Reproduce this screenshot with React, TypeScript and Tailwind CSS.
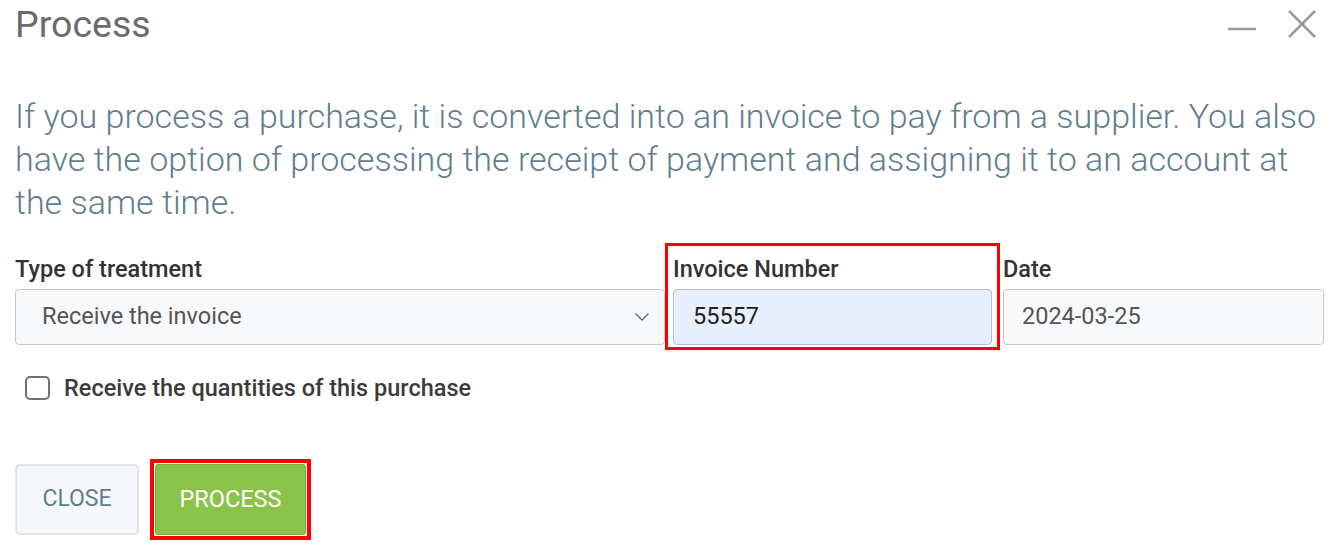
import { ChevronDown } from "lucide-react";

export default function App() {
  return (
    <div className="w-[1333px] h-[545px] bg-white overflow-hidden font-['Roboto',sans-serif]">
      {/* Header */}
      <div className="flex items-center justify-between pl-[15px] pr-[16px] h-[48px]">
        <h1 className="text-[37.5px] leading-none text-[#6b6b6b] font-normal mt-[2px]">Process</h1>
        <div className="flex items-center gap-[30px] text-[#9a9a9a]">
          <svg width="30" height="30" viewBox="0 0 30 30" fill="none">
            <line x1="1" y1="20" x2="29" y2="20" stroke="currentColor" strokeWidth="2.5" />
          </svg>
          <svg width="30" height="30" viewBox="0 0 30 30" fill="none">
            <line x1="2" y1="2" x2="28" y2="28" stroke="currentColor" strokeWidth="2.5" />
            <line x1="28" y1="2" x2="2" y2="28" stroke="currentColor" strokeWidth="2.5" />
          </svg>
        </div>
      </div>

      {/* Description */}
      <p className="mt-[47px] pl-[15px] pr-[8px] text-[34px] leading-[43px] font-light text-[#5f7e8e]">
        If you process a purchase, it is converted into an invoice to pay from a supplier. You also have the option of processing the receipt of payment and assigning it to an account at the same time.
      </p>

      {/* Fields */}
      <div className="flex items-end mt-[19px] px-[15px]">
        <div className="w-[650px] flex flex-col">
          <label className="text-[23.5px] font-medium text-[#333] leading-[24px] mb-[8px]">Type of treatment</label>
          <div className="h-[56px] rounded-[4px] border border-[#c8c8c8] bg-[#f8f9fb] flex items-center justify-between pl-[26px] pr-[10px]">
            <span className="text-[23.5px] text-[#555]">Receive the invoice</span>
            <ChevronDown className="w-[24px] h-[24px] text-[#666]" strokeWidth={1.4} />
          </div>
        </div>
        <div className="w-[335px] h-[107px] border-[3px] border-[#ff0000] flex flex-col justify-end px-[5px] pb-[2px] mb-[-5px]">
          <label className="text-[23.5px] font-medium text-[#333] leading-[24px] mb-[8px]">Invoice Number</label>
          <div className="h-[56px] rounded-[4px] border border-[#b5bcc8] bg-[#e8effc] flex items-center pl-[19px]">
            <span className="text-[23.5px] text-[#222]">55557</span>
          </div>
        </div>
        <div className="flex-1 flex flex-col ml-[3px] mr-[-6px]">
          <label className="text-[23.5px] font-medium text-[#333] leading-[24px] mb-[8px]">Date</label>
          <div className="h-[56px] rounded-[4px] border border-[#c8c8c8] bg-[#f8f9fb] flex items-center pl-[18px]">
            <span className="text-[23.5px] text-[#555]">2024-03-25</span>
          </div>
        </div>
      </div>

      {/* Checkbox */}
      <div className="flex items-center h-[28px] mt-[29px] pl-[25px]">
        <div className="w-[25px] h-[24px] rounded-[5px] border-[2px] border-[#707070] bg-white" />
        <span className="ml-[14px] text-[23.5px] leading-[28px] font-medium text-[#3b3b3b]">Receive the quantities of this purchase</span>
      </div>

      {/* Buttons */}
      <div className="flex items-center mt-[57px] pl-[15px]">
        <button className="w-[124px] h-[71px] rounded-[5px] border-[2px] border-[#dfe3e8] bg-[#f5f7fa] text-[23px] text-[#5f7e8e]">
          CLOSE
        </button>
        <div className="ml-[11px] border-[4px] border-[#ff0000] p-[1px]">
          <button className="w-[151px] h-[71px] rounded-[3px] border border-[#6fae38] bg-[#8bc34a] text-[23.5px] text-white">
            PROCESS
          </button>
        </div>
      </div>
    </div>
  );
}
